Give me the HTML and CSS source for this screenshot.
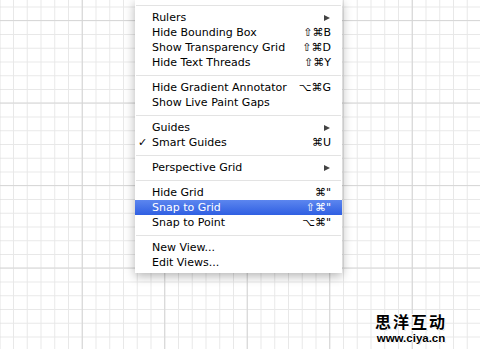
FILE: index.html
```html
<!DOCTYPE html>
<html lang="en">

<head>
    <meta charset="UTF-8">
    <title>View Menu</title>
    <link rel="stylesheet" href="styles.css">
</head>

<body>
    <div class="menu">
        <div class="separator"></div>
        <div class="item"><span class="label">Rulers</span><span class="arrow"></span></div>
        <div class="item"><span class="label">Hide Bounding Box</span><span class="key">⇧⌘B</span></div>
        <div class="item"><span class="label">Show Transparency Grid</span><span class="key">⇧⌘D</span></div>
        <div class="item"><span class="label">Hide Text Threads</span><span class="key">⇧⌘Y</span></div>
        <div class="separator"></div>
        <div class="item"><span class="label">Hide Gradient Annotator</span><span class="key">⌥⌘G</span></div>
        <div class="item"><span class="label">Show Live Paint Gaps</span></div>
        <div class="separator"></div>
        <div class="item"><span class="label">Guides</span><span class="arrow"></span></div>
        <div class="item"><span class="check">✓</span><span class="label">Smart Guides</span><span class="key">⌘U</span></div>
        <div class="separator"></div>
        <div class="item"><span class="label">Perspective Grid</span><span class="arrow"></span></div>
        <div class="separator"></div>
        <div class="item"><span class="label">Hide Grid</span><span class="key">⌘"</span></div>
        <div class="item selected"><span class="label">Snap to Grid</span><span class="key">⇧⌘"</span></div>
        <div class="item"><span class="label">Snap to Point</span><span class="key">⌥⌘"</span></div>
        <div class="separator"></div>
        <div class="item"><span class="label">New View...</span></div>
        <div class="item"><span class="label">Edit Views...</span></div>
    </div>

    <div class="watermark">
        <div class="wm-name">思洋互动</div>
        <div class="wm-url">www.ciya.cn</div>
    </div>
</body>

</html>
```

FILE: styles.css
```css
body {
    margin: 0;
    height: 349px;
    overflow: hidden;
    position: relative;
    font-family: "DejaVu Sans", "Noto Sans", sans-serif;
    background-color: #fff;
    background-image:
        linear-gradient(to right, #d4d4d4 1px, transparent 1px),
        linear-gradient(to bottom, #d8d8d8 1px, transparent 1px),
        linear-gradient(to right, #e8e8e8 1px, transparent 1px),
        linear-gradient(to bottom, #e8e8e8 1px, transparent 1px);
    background-size: 82.5px 82.5px, 82.5px 82.5px, 13.75px 13.75px, 13.75px 13.75px;
    background-position: -0.75px 0, 0 20px, 13px 0, 0 6.5px;
}

.menu {
    margin-left: 135px;
    width: 207px;
    padding-bottom: 3px;
    background: #fff;
    box-shadow: 0 3px 10px rgba(0, 0, 0, 0.3);
    color: #000;
    font-size: 11px;
}

.separator {
    height: 10px;
    display: flex;
    align-items: center;
}

.separator::after {
    content: "";
    flex: 1;
    height: 1px;
    margin: 0 1px;
    background: #e3e3e3;
}

.item {
    height: 15px;
    display: flex;
    align-items: center;
    padding: 0 11px 0 17px;
    position: relative;
    white-space: nowrap;
}

.item .label {
    flex: 1;
}

.check {
    position: absolute;
    left: 3px;
}

.arrow {
    width: 0;
    height: 0;
    margin-right: 1px;
    border-top: 3.5px solid transparent;
    border-bottom: 3.5px solid transparent;
    border-left: 6px solid #444;
}

.selected {
    background: linear-gradient(to bottom, #5c86ef, #2f5fe2);
    color: #fff;
}

.watermark {
    position: absolute;
    left: 370px;
    top: 312px;
    width: 82px;
    text-align: center;
    color: #000;
    font-weight: bold;
    text-shadow: 1px 0 #fff, -1px 0 #fff, 0 1px #fff, 0 -1px #fff, 1px 1px #ddd, -1px -1px #fff;
}

.wm-name {
    font-family: "Noto Sans CJK SC", sans-serif;
    font-size: 16px;
    line-height: 19px;
    letter-spacing: 2px;
}

.wm-url {
    margin-top: 1px;
    font-family: "Liberation Sans", sans-serif;
    font-size: 11.5px;
    line-height: 12px;
}
```
